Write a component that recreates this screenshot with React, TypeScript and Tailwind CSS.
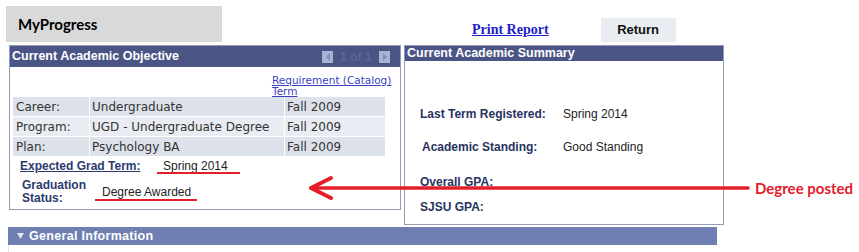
const rows = [
  { label: 'Career:', value: 'Undergraduate', term: 'Fall 2009', bg: 'bg-[#dde2ea]' },
  { label: 'Program:', value: 'UGD - Undergraduate Degree', term: 'Fall 2009', bg: 'bg-[#e9ecf2]' },
  { label: 'Plan:', value: 'Psychology BA', term: 'Fall 2009', bg: 'bg-[#dde2ea]' },
];

const NavArrow = ({ dir }: { dir: 'left' | 'right' }) => (
  <div className="w-[11px] h-[12px] bg-[#a7b4d4] flex items-center justify-center">
    <svg width="6" height="8" viewBox="0 0 6 8">
      {dir === 'left' ? (
        <polygon points="5,0 5,8 1,4" fill="#8090bf" />
      ) : (
        <polygon points="1,0 1,8 5,4" fill="#8090bf" />
      )}
    </svg>
  </div>
);

const ObjectivePanel = () => (
  <div className="w-[392px] h-[165px] border border-[#959bb4] bg-white flex flex-col">
    <div className="h-[21px] bg-[#4a5586] flex items-center justify-between pl-[2px] pr-[10px]">
      <span className="text-white font-bold text-[12.5px] font-['Liberation_Sans',Arial,sans-serif]">
        Current Academic Objective
      </span>
      <div className="flex items-center gap-[3px]">
        <NavArrow dir="left" />
        <span className="text-[#56689c] font-bold text-[12px] w-[40px] text-center font-['Liberation_Sans',Arial,sans-serif]">
          1 of 1
        </span>
        <NavArrow dir="right" />
      </div>
    </div>
    <div className="flex-1 font-['DejaVu_Sans',Verdana,sans-serif]">
      <div className="pt-[8px] pl-[262px]">
        <a className="block text-[10.5px] leading-[11px] text-[#3b3fbf] underline">
          Requirement (Catalog)
          <br />
          Term
        </a>
      </div>
      <div className="ml-[3px] grid grid-cols-[76px_194px_100px] gap-y-[1px] gap-x-[1px] w-[372px]">
        {rows.map((r) => (
          <div key={r.label} className="contents">
            <div className={`${r.bg} h-[19px] flex items-center pl-[3px] text-[12px] text-[#333]`}>{r.label}</div>
            <div className={`${r.bg} h-[19px] flex items-center pl-[2px] text-[12px] text-[#333]`}>{r.value}</div>
            <div className={`${r.bg} h-[19px] flex items-center pl-[2px] text-[12px] text-[#333]`}>{r.term}</div>
          </div>
        ))}
      </div>
      <div className="mt-[3px] flex items-center h-[14px] pl-[10px] font-['Liberation_Sans',Arial,sans-serif]">
        <span className="w-[143px] text-[12px] font-bold text-[#2c3a6e] underline">Expected Grad Term:</span>
        <span className="relative text-[12px] text-[#222]">
          Spring 2014
          <span className="absolute left-[-6px] top-[15px] w-[83px] h-[2px] bg-[#e3202a]" />
        </span>
      </div>
      <div className="mt-[6px] flex items-center pl-[12px] font-['Liberation_Sans',Arial,sans-serif]">
        <div className="w-[80px] text-[12px] font-bold leading-[13px] text-[#2c3a6e]">
          Graduation
          <br />
          Status:
        </div>
        <span className="relative text-[12px] text-[#222] mb-[1px]">
          Degree Awarded
          <span className="absolute left-[-7px] top-[16px] w-[102px] h-[2px] bg-[#e3202a]" />
        </span>
      </div>
    </div>
  </div>
);

const summary = [
  { label: 'Last Term Registered:', value: 'Spring 2014', mt: 'mt-[45px]', pl: '' },
  { label: 'Academic Standing:', value: 'Good Standing', mt: 'mt-[17px]', pl: 'pl-[2px]' },
  { label: 'Overall GPA:', value: '', mt: 'mt-[19px]', pl: '' },
  { label: 'SJSU GPA:', value: '', mt: 'mt-[9px]', pl: '' },
];

const SummaryPanel = () => (
  <div className="w-[320px] h-[180px] border border-[#959bb4] bg-white flex flex-col font-['Liberation_Sans',Arial,sans-serif]">
    <div className="h-[15px] bg-[#4a5586] flex items-center pl-[2px]">
      <span className="text-white font-bold text-[12.5px]">Current Academic Summary</span>
    </div>
    {summary.map((s) => (
      <div key={s.label} className={`${s.mt} h-[16px] flex items-center pl-[15px]`}>
        <span className={`w-[143px] ${s.pl} text-[12px] font-bold text-[#27335f]`}>{s.label}</span>
        <span className="text-[12px] text-[#222]">{s.value}</span>
      </div>
    ))}
  </div>
);

export default function App() {
  return (
    <div className="relative w-[859px] h-[252px] bg-white overflow-hidden">
      <div className="flex items-start pt-[6px] pl-[6px] h-[45px]">
        <div className="w-[216px] h-[36px] bg-[#d9d9d9] flex items-center pl-[12px]">
          <span className="font-['Lato',sans-serif] font-bold text-[15px] text-black">MyProgress</span>
        </div>
        <a className="ml-[250px] mt-[15px] font-['Liberation_Serif','Times_New_Roman',serif] font-bold text-[14px] leading-[18px] text-[#1d1dc8] underline">
          Print Report
        </a>
        <div className="ml-[52px] mt-[12px] w-[75px] h-[24px] bg-[#e9ecf0] flex items-center justify-center">
          <span className="font-['Liberation_Sans',Arial,sans-serif] font-bold text-[13px] text-[#111]">Return</span>
        </div>
      </div>

      <div className="flex items-start gap-[3px] pl-[9px]">
        <ObjectivePanel />
        <SummaryPanel />
      </div>

      <div className="mt-[2px] ml-[8px] w-[709px] h-[18px] bg-[#6f7fb2] flex items-center pl-[9px] gap-[5px]">
        <svg width="7" height="6" viewBox="0 0 7 6">
          <polygon points="0,0 7,0 3.5,6" fill="#e4e8f2" />
        </svg>
        <span className="text-white font-bold text-[12.5px] tracking-[0.3px] font-['Liberation_Sans',Arial,sans-serif]">
          General Information
        </span>
      </div>
      <div className="ml-[8px] h-[8px] border-l border-[#e2e2e2]" />

      <svg className="absolute left-[305px] top-[175px]" width="446" height="26" viewBox="0 0 446 26">
        <line x1="6" y1="13" x2="443" y2="13" stroke="#e3202a" strokeWidth="3.5" strokeLinecap="round" />
        <polyline points="26,3 6,13 26,23" fill="none" stroke="#e3202a" strokeWidth="4" strokeLinecap="round" strokeLinejoin="round" />
      </svg>
      <span className="absolute left-[755px] top-[178px] font-['Lato',sans-serif] font-bold text-[15px] leading-[20px] text-[#e3202a]">
        Degree posted
      </span>
    </div>
  );
}
